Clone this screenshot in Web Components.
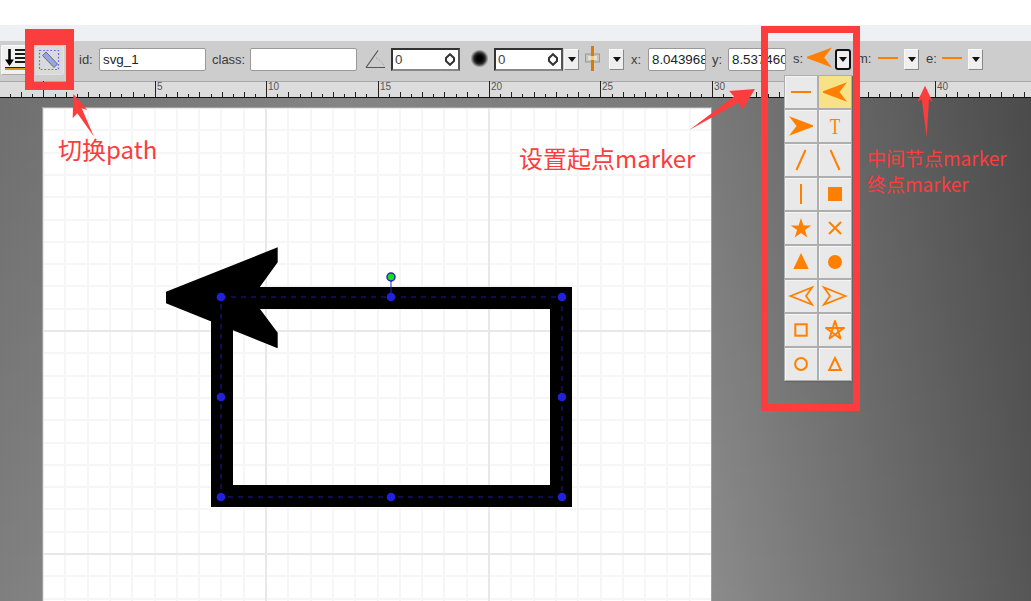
<!DOCTYPE html>
<html>
<head>
<meta charset="utf-8">
<title>svg-edit marker</title>
<style>
  html, body { margin: 0; padding: 0; background: #fff; }
</style>
</head>
<body>
<se-editor>
  <se-toolbar>
    <se-tool-btn style="margin-left:1px">
      <svg width="26" height="26" viewBox="0 0 26 26">
        <path d="M6.500 2v13" stroke="#000" stroke-width="2.600"/>
        <path d="M2 12.500h9L6.500 19z" fill="#000"/>
        <path d="M12 3h13M12 7h13M12 11h13M12 15h13" stroke="#1a1a1a" stroke-width="2.200"/>
        <path d="M2 22h24" stroke="#d09a20" stroke-width="2"/>
        <path d="M2 20.500h24" stroke="#222" stroke-width="1"/>
      </svg>
    </se-tool-btn>
    <se-tool-btn pressed style="margin-left:3px">
      <svg width="22" height="22" viewBox="0 0 22 22">
        <rect x="1.500" y="1.500" width="19" height="19" fill="none" stroke="#6a6aee" stroke-width="1.200" stroke-dasharray="1.800 1.800"/>
        <path d="M4.500 6.500 8 3 19.500 15 16 18.500z" fill="#98a6de" stroke="#666a88"/>
      </svg>
    </se-tool-btn>
    <se-field label="id:" lw="20" w="107" value="svg_1" style="margin-left:15px"></se-field>
    <se-field label="class:" lw="38" w="107" style="margin-left:6px"></se-field>
    <se-icon w="22" style="margin-left:8px">
      <svg width="22" height="22" viewBox="0 0 22 22">
        <path d="M1 18.500 13 1.500M1 18.500H20" fill="none" stroke="#555" stroke-width="1.200"/>
        <path d="M11 9q7 3 8 9" fill="none" stroke="#999" stroke-dasharray="1.500 1.500"/>
      </svg>
    </se-icon>
    <se-spin value="0" style="margin-left:4px"></se-spin>
    <se-icon w="15" style="margin-left:12px">
      <svg width="19" height="19" viewBox="0 0 19 19" style="margin:0 -2px 3px">
        <defs><radialGradient id="blur"><stop offset="0.28" stop-color="#000"/><stop offset="0.58" stop-color="#262626"/><stop offset="0.95" stop-color="#cdcdcd"/></radialGradient></defs>
        <circle cx="9.500" cy="9.500" r="9.500" fill="url(#blur)"/>
      </svg>
    </se-icon>
    <se-spin value="0" style="margin-left:7px"></se-spin>
    <se-drop style="margin-left:1px"></se-drop>
    <se-icon w="15" style="margin-left:6px">
      <svg width="15" height="25" viewBox="0 0 15 25" style="margin-bottom:3px">
        <rect x="0.500" y="8" width="14" height="8" fill="#c4c4c0" stroke="#999"/>
        <path d="M7.500 0v25" stroke="#e07800" stroke-width="3"/>
        <rect x="3" y="10" width="9" height="4" fill="#fff0d0" fill-opacity=".65"/>
      </svg>
    </se-icon>
    <se-drop style="margin-left:9px"></se-drop>
    <se-field label="x:" lw="17" w="58" value="8.043968" style="margin-left:7px"></se-field>
    <se-field label="y:" lw="16" w="58" value="8.537460" style="margin-left:6px"></se-field>
    <se-marker-pick label="s:" lw="14" w="25" shape="left" style="margin-left:7px"></se-marker-pick>
    <se-drop w="16" focused style="margin-left:3px"></se-drop>
    <se-marker-pick label="m:" lw="21" w="20" shape="wline" style="margin-left:6px"></se-marker-pick>
    <se-drop style="margin-left:6px"></se-drop>
    <se-marker-pick label="e:" lw="16" w="20" shape="wline" style="margin-left:7px"></se-marker-pick>
    <se-drop style="margin-left:6px"></se-drop>
  </se-toolbar>
  <se-ruler></se-ruler>
  <se-workarea></se-workarea>
  <se-marker-menu slot="over"></se-marker-menu>
  <se-notes slot="over"></se-notes>
</se-editor>

<script>
  // ----- marker shapes -----
  const O = "#ff8000";
  const MARKERS = {
    line: `<path d="M2 12h20" stroke="${O}" stroke-width="2"/>`,
    wline: `<path d="M0 12h24" stroke="${O}" stroke-width="2.400"/>`,
    left: `<path d="M0 11.200 24 2.300 16.500 12 24 21.700 0 12.800z" fill="${O}"/>`,
    right: `<path d="M24 11.200 0 2.300 7.500 12 0 21.700 24 12.800z" fill="${O}"/>`,
    text: `<text transform="translate(12 20) scale(.72 1)" text-anchor="middle" font-family="Liberation Serif" font-size="24" fill="${O}">T</text>`,
    fwd: `<path d="M7.500 22 16.500 2" stroke="${O}" stroke-width="2" fill="none"/>`,
    back: `<path d="M7.500 2 16.500 22" stroke="${O}" stroke-width="2" fill="none"/>`,
    bar: `<path d="M12 2v20" stroke="${O}" stroke-width="2" fill="none"/>`,
    box: `<rect x="5" y="5" width="14" height="14" fill="${O}"/>`,
    star: `<path d="M12 2 14.430 9.460 22.300 9.500 15.930 14.080 18.350 21.600 12 16.930 5.650 21.600 8.070 14.080 1.700 9.500 9.570 9.460z" fill="${O}"/>`,
    cross: `<path d="M6 6 18 18M18 6 6 18" stroke="${O}" stroke-width="2" fill="none"/>`,
    tri: `<path d="M12 3 19.700 19H4.300z" fill="${O}"/>`,
    dot: `<circle cx="12" cy="12" r="7" fill="${O}"/>`,
    oleft: `<path d="M1.500 12 23 3.500 17 12 23 20.500z" fill="none" stroke="${O}" stroke-width="1.800"/>`,
    oright: `<path d="M22.500 12 1 3.500 7 12 1 20.500z" fill="none" stroke="${O}" stroke-width="1.800"/>`,
    obox: `<rect x="6.300" y="6.300" width="11.400" height="11.400" fill="none" stroke="${O}" stroke-width="2"/>`,
    ostar: `<path d="M12 3 17.500 20.500 3 10H21L6.500 20.500z" fill="none" stroke="${O}" stroke-width="2" stroke-linejoin="round"/>`,
    ocirc: `<circle cx="12" cy="12" r="5.900" fill="none" stroke="${O}" stroke-width="2"/>`,
    otri: `<path d="M12 6 17.800 18H6.200z" fill="none" stroke="${O}" stroke-width="2"/>`
  };

  const FONT = `"Liberation Sans", Arial, sans-serif`;

  // ----- root -----
  class SeEditor extends HTMLElement {
    constructor() {
      super();
      this.attachShadow({ mode: "open" }).innerHTML = `
        <style>
          :host {
            position: relative;
            display: flex;
            flex-direction: column;
            width: 1031px;
            height: 601px;
            overflow: hidden;
            font-family: ${FONT};
          }
          .white { height: 25px; flex: none; background: #fff; }
          .band { height: 16px; flex: none; background: #eff0f4; }
        </style>
        <div class="white"></div>
        <div class="band"></div>
        <slot></slot>
        <slot name="over"></slot>
      `;
    }
  }

  class SeToolbar extends HTMLElement {
    constructor() {
      super();
      this.attachShadow({ mode: "open" }).innerHTML = `
        <style>
          :host {
            display: flex;
            flex: none;
            align-items: center;
            box-sizing: border-box;
            height: 40px;
            padding-bottom: 3px;
            background: #cdcdcd;
            color: #3c3c3c;
            font-size: 13px;
          }
        </style>
        <slot></slot>
      `;
    }
  }

  class SeToolBtn extends HTMLElement {
    constructor() {
      super();
      this.attachShadow({ mode: "open" }).innerHTML = `
        <style>
          :host {
            display: flex;
            flex: none;
            align-items: center;
            justify-content: center;
            box-sizing: border-box;
            width: 30px;
            height: 30px;
            background: #f0f0f0;
            border: 1px solid;
            border-color: #f8f8f8 #aaa #aaa #f8f8f8;
            border-radius: 2px;
          }
          :host([pressed]) {
            background: #dadada;
            border-color: #c8c8c8 #e2e2e2 #e2e2e2 #c8c8c8;
            border-radius: 3px;
          }
        </style>
        <slot></slot>
      `;
    }
  }

  class SeIcon extends HTMLElement {
    constructor() {
      super();
      const w = this.getAttribute("w");
      this.attachShadow({ mode: "open" }).innerHTML = `
        <style>
          :host {
            display: flex;
            flex: none;
            align-items: center;
            justify-content: center;
            width: ${w}px;
          }
        </style>
        <slot></slot>
      `;
    }
  }

  class SeField extends HTMLElement {
    constructor() {
      super();
      const label = this.getAttribute("label");
      const lw = this.getAttribute("lw");
      const w = this.getAttribute("w");
      const value = this.getAttribute("value") || "";
      this.attachShadow({ mode: "open" }).innerHTML = `
        <style>
          :host { display: flex; flex: none; align-items: center; }
          .label { width: ${lw}px; white-space: nowrap; }
          .box {
            box-sizing: border-box;
            width: ${w}px;
            height: 23px;
            padding: 0 3px;
            background: #fff;
            border: 1px solid #999;
            border-radius: 2px;
            color: #222;
            font-size: 13.330px;
            line-height: 21px;
            white-space: nowrap;
            overflow: hidden;
          }
        </style>
        <span class="label">${label}</span>
        <div class="box">${value}</div>
      `;
    }
  }

  class SeSpin extends HTMLElement {
    constructor() {
      super();
      const value = this.getAttribute("value") || "";
      this.attachShadow({ mode: "open" }).innerHTML = `
        <style>
          :host {
            display: flex;
            flex: none;
            align-items: center;
            justify-content: space-between;
            box-sizing: border-box;
            width: 69px;
            height: 23px;
            padding: 0 3px 0 2px;
            background: #fff;
            border: 2px solid;
            border-color: #333 #555 #888 #333;
            color: #444;
            font-size: 13.330px;
          }
        </style>
        <span>${value}</span>
        <svg width="10" height="13" viewBox="0 0 10 13">
          <path d="M5 1.200 9 5V8L5 11.800 1 8V5z" fill="#fff" stroke="#333" stroke-width="2"/>
        </svg>
      `;
    }
  }

  class SeDrop extends HTMLElement {
    constructor() {
      super();
      const w = this.getAttribute("w") || 15;
      this.attachShadow({ mode: "open" }).innerHTML = `
        <style>
          :host {
            display: flex;
            flex: none;
            align-items: center;
            justify-content: center;
            box-sizing: border-box;
            width: ${w}px;
            height: 21px;
            background: #efefef;
            border: 1px solid;
            border-color: #f8f8f8 #888 #888 #f8f8f8;
          }
          :host([focused]) {
            border: 2px solid #111;
            border-radius: 3px;
          }
        </style>
        <svg width="8" height="5" viewBox="0 0 8 5"><path d="M0 0h8L4 5z" fill="#111"/></svg>
      `;
    }
  }

  class SeMarkerPick extends HTMLElement {
    constructor() {
      super();
      const label = this.getAttribute("label");
      const lw = this.getAttribute("lw");
      const w = this.getAttribute("w");
      const shape = this.getAttribute("shape");
      this.attachShadow({ mode: "open" }).innerHTML = `
        <style>
          :host { display: flex; flex: none; align-items: center; margin-bottom: 2px; }
          .label { width: ${lw}px; white-space: nowrap; }
          svg { display: block; margin-bottom: 2px; }
        </style>
        <span class="label">${label}</span>
        <svg width="${w}" height="${w}" viewBox="0 0 24 24" preserveAspectRatio="none">${MARKERS[shape]}</svg>
      `;
    }
  }

  // ----- ruler: a tick every 11.14px, a numbered one every 111.4px -----
  class SeRuler extends HTMLElement {
    constructor() {
      super();
      let ticks = "";
      let labels = "";
      for (let i = -3; i < 90; i++) {
        const x = Math.round(43.4 + i * 11.14) + 0.5;
        if (i % 10 === 0) {
          ticks += `M${x} 0V16`;
          labels += `<text x="${x + 1.5}" y="9">${i / 2}</text>`;
        } else {
          const h = i % 2 === 0 ? 5 : 3;
          ticks += `M${x} ${16 - h}V16`;
        }
      }
      this.attachShadow({ mode: "open" }).innerHTML = `
        <style>
          :host {
            display: block;
            flex: none;
            height: 17px;
            background: #dcdcdc;
            box-shadow: inset 0 1px 0 #a8a8a8;
          }
          svg { display: block; }
          text { font: 10px ${FONT}; fill: #555; }
        </style>
        <svg width="1031" height="17">
          <path d="${ticks}" stroke="#222" fill="none"/>
          <path d="M0 16.500H1031" stroke="#111"/>
          ${labels}
        </svg>
      `;
    }
  }

  // ----- grey area that holds the page -----
  class SeWorkarea extends HTMLElement {
    constructor() {
      super();
      this.attachShadow({ mode: "open" }).innerHTML = `
        <style>
          :host {
            display: block;
            flex: 1;
            min-height: 0;
            box-sizing: border-box;
            padding: 10px 0 0 43px;
            overflow: hidden;
            background:
              linear-gradient(180deg, rgba(0,0,0,.13), rgba(0,0,0,0)),
              linear-gradient(90deg, #7f7f7f 0, #989898 340px, #8b8b8b 710px, #565656 1031px);
          }
        </style>
        <se-canvas></se-canvas>
      `;
    }
  }

  class SeCanvas extends HTMLElement {
    constructor() {
      super();
      const step = 22.3;
      let minor = "";
      let major = "";
      for (let i = 0; i <= 30; i++) {
        const p = Math.round(i * step);
        if (i % 10 === 0) {
          major += `M${p} 0V500M0 ${p}H668`;
        } else {
          minor += `M${p} 0V500M0 ${p}H668`;
        }
      }
      const handles = [[178, 189], [348, 189], [519, 189], [178, 289], [519, 289], [178, 389], [348, 389], [519, 389]]
        .map(([x, y]) => `<circle cx="${x}" cy="${y}" r="4.300" fill="#2222dd"/>`).join("");
      this.attachShadow({ mode: "open" }).innerHTML = `
        <style>
          :host {
            display: block;
            width: 668px;
            height: 500px;
            background: #fff;
            box-shadow: 0 0 0 1px #a0a0a0;
          }
          svg { display: block; }
        </style>
        <svg width="668" height="500">
          <path d="${minor}" stroke="#f6f6f6" stroke-width="2" fill="none"/>
          <path d="${major}" stroke="#e8e8e8" stroke-width="2" fill="none"/>
          <rect x="179" y="190" width="339" height="198" fill="none" stroke="#000" stroke-width="22"/>
          <path d="M123 183.700 234.700 139.300V154.300L217 178.700V201L234.700 224.700V240.300L123 195.300z" fill="#000"/>
          <rect x="178" y="189" width="341" height="200" fill="none" stroke="#1c1c99" stroke-dasharray="5 5"/>
          <path d="M348 169V189" stroke="#2222dd"/>
          <circle cx="348" cy="169" r="4" fill="#11e022" stroke="#2222cc" stroke-width="1.500"/>
          ${handles}
        </svg>
      `;
    }
  }

  // ----- marker dropdown -----
  class SeMarkerMenu extends HTMLElement {
    constructor() {
      super();
      const order = ["line", "left", "right", "text", "fwd", "back", "bar", "box", "star", "cross", "tri", "dot", "oleft", "oright", "obox", "ostar", "ocirc", "otri"];
      const cells = order.map(k => `
        <div class="cell${k === "left" ? " on" : ""}">
          <svg width="24" height="24" viewBox="0 0 24 24">${MARKERS[k]}</svg>
        </div>`).join("");
      this.attachShadow({ mode: "open" }).innerHTML = `
        <style>
          :host {
            position: absolute;
            left: 784px;
            top: 75px;
            display: grid;
            grid-template-columns: 32px 32px;
            grid-auto-rows: 32px;
            gap: 2px;
            padding: 1px;
            background: #aeaeae;
            box-shadow: 1px 1px 1px #666;
          }
          .cell {
            display: flex;
            align-items: center;
            justify-content: center;
            background: #e9e9e9;
            box-shadow: inset 1px 1px 0 #f5f5f5;
          }
          .on { background: #f8e288; box-shadow: none; }
          svg { display: block; overflow: visible; }
        </style>
        ${cells}
      `;
    }
  }

  // ----- red annotations drawn over the screenshot -----
  class SeNotes extends HTMLElement {
    constructor() {
      super();
      this.attachShadow({ mode: "open" }).innerHTML = `
        <style>
          :host {
            position: absolute;
            inset: 0;
            color: #fb3d3d;
            font-family: "Noto Sans CJK SC", ${FONT}, sans-serif;
            pointer-events: none;
          }
          .frame { position: absolute; box-sizing: border-box; border: solid #fb3d3d; }
          .note { position: absolute; white-space: nowrap; line-height: 1; }
          svg { position: absolute; left: 0; top: 0; }
        </style>
        <div class="frame" style="left:25px;top:29px;width:49px;height:61px;border-width:16px 8px 8px 9px"></div>
        <div class="frame" style="left:761px;top:26px;width:99px;height:385px;border-width:7px 7px 7px 7px"></div>
        <svg width="1031" height="601">
          <g fill="#fb3d3d">
            <path d="M73.300 94 87.300 110 81.700 108.300 94 136.700 77.300 113.300 72.700 118.300z"/>
            <path d="M755 89 742.700 109.300 738.300 102.700 689.300 130 734 96.500 729.300 91z"/>
            <path d="M925 85.700 932.700 101.700 929 99.300 926.700 137.300 921.700 99.300 917.300 101.700z"/>
          </g>
        </svg>
        <span class="note" style="left:58px;top:137px;font-size:24px">切换path</span>
        <span class="note" style="left:519px;top:146px;font-size:24px">设置起点marker</span>
        <span class="note" style="left:867px;top:148px;font-size:19px">中间节点marker</span>
        <span class="note" style="left:867px;top:174px;font-size:19px">终点marker</span>
      `;
    }
  }

  customElements.define("se-editor", SeEditor);
  customElements.define("se-toolbar", SeToolbar);
  customElements.define("se-tool-btn", SeToolBtn);
  customElements.define("se-icon", SeIcon);
  customElements.define("se-field", SeField);
  customElements.define("se-spin", SeSpin);
  customElements.define("se-drop", SeDrop);
  customElements.define("se-marker-pick", SeMarkerPick);
  customElements.define("se-ruler", SeRuler);
  customElements.define("se-canvas", SeCanvas);
  customElements.define("se-workarea", SeWorkarea);
  customElements.define("se-marker-menu", SeMarkerMenu);
  customElements.define("se-notes", SeNotes);
</script>
</body>
</html>
